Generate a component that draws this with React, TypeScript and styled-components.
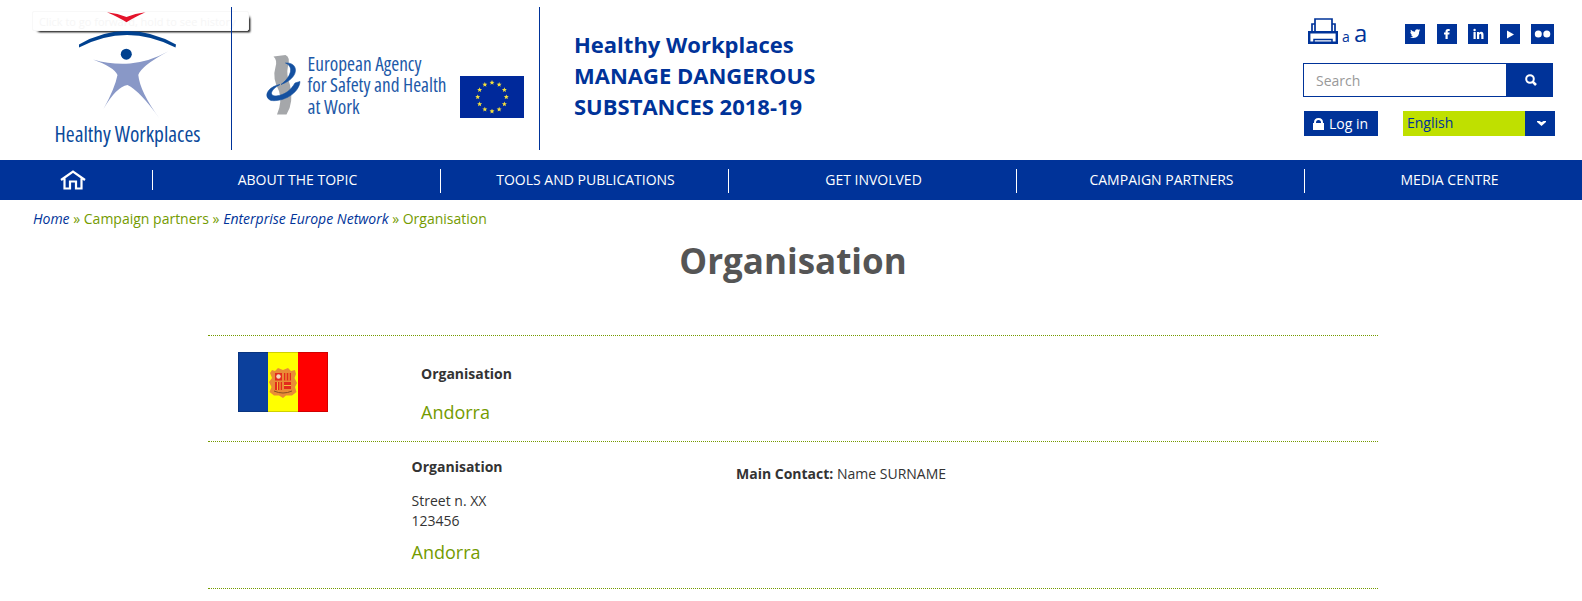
import React from 'react';
import styled, { createGlobalStyle } from 'styled-components';

const blue = '#003399';
const green = '#749b00';

const Global = createGlobalStyle`
  *, *::before, *::after { box-sizing: border-box; }
  html, body { margin: 0; overflow: hidden; background: #fff; }
  body { font: 14px/20px 'Open Sans', sans-serif; color: #333; }
  h1, h2, p, ul { margin: 0; padding: 0; }
  svg { display: block; }
`;

const Page = styled.div`
  width: 1582px;
  height: 601px;
  overflow: hidden;
  isolation: isolate;
`;

const Header = styled.header`
  position: relative;
  display: flex;
  height: 160px;
  padding-top: 7px;
`;

const BrandCell = styled.div<{ $width: number }>`
  width: ${(p) => p.$width}px;
  height: 143px;
  border-right: 1px solid ${blue};
`;

const Tooltip = styled.div`
  position: absolute;
  z-index: -1;
  left: 32px;
  top: 11px;
  width: 217px;
  height: 20px;
  padding-left: 6px;
  border: 1px solid #f8f8f8;
  border-radius: 2px;
  background: #fff;
  box-shadow: 4px 4px 2px -3px rgba(0, 0, 0, 0.9), 3px 3px 2px -2px rgba(0, 0, 0, 0.4);
  color: #f6f6f6;
  font-size: 11px;
  line-height: 19px;
  white-space: nowrap;
`;

const CampaignTitle = styled.h2`
  flex: 1;
  padding: 22px 0 0 34px;
  color: ${blue};
  font-size: 22px;
  font-weight: 700;
  line-height: 31px;
`;

const Tools = styled.div`
  width: 279px;
  padding-top: 11px;
`;

const TopTools = styled.div`
  display: flex;
  height: 45px;
  padding-left: 5px;
`;

const TextSmaller = styled.span`
  width: 16px;
  padding: 4px 0 0 4px;
  color: ${blue};
  font-size: 14px;
  line-height: 30px;
`;

const TextLarger = styled.span`
  width: 16px;
  color: ${blue};
  font-size: 24px;
  line-height: 29px;
`;

const Socials = styled.div`
  display: flex;
  gap: 11.5px;
  padding: 6px 0 0 35px;
`;

const Social = styled.span<{ $width?: number }>`
  width: ${(p) => p.$width ?? 20}px;
  height: 20px;
  background: ${blue};
`;

const SearchBox = styled.div`
  display: flex;
  width: 250px;
  height: 34px;
  border: 1px solid ${blue};
`;

const SearchField = styled.span`
  flex: 1;
  padding-left: 12px;
  color: #999;
  line-height: 34px;
`;

const SearchButton = styled.span`
  display: flex;
  align-items: center;
  justify-content: center;
  width: 46px;
  padding-left: 3px;
  background: ${blue};
`;

const Account = styled.div`
  display: flex;
  padding: 14px 0 0 1px;
`;

const Login = styled.span`
  display: flex;
  align-items: center;
  gap: 5px;
  width: 74px;
  height: 25px;
  margin-right: 25px;
  padding-left: 9px;
  background: ${blue};
  color: #fff;
`;

const Language = styled.span`
  width: 122px;
  height: 25px;
  padding-left: 4px;
  background: #bfe000;
  color: ${blue};
  line-height: 24px;
`;

const LanguageArrow = styled.span`
  display: flex;
  align-items: center;
  justify-content: center;
  width: 30px;
  height: 25px;
  padding-left: 2px;
  background: ${blue};
`;

const Nav = styled.nav`
  display: flex;
  height: 40px;
  background: ${blue};
  overflow: hidden;
`;

const NavHome = styled.span`
  flex: 0 0 153px;
  display: flex;
  align-items: center;
  padding-left: 60px;
`;

const NavItem = styled.span`
  flex: 0 0 288px;
  height: 24px;
  margin-top: 9px;
  padding-left: 2px;
  border-right: 1px solid #fff;
  color: #fff;
  line-height: 22px;
  text-align: center;
`;

const HomeDivider = styled.span`
  width: 1px;
  height: 20px;
  margin-left: auto;
  background: #fff;
`;

const Breadcrumb = styled.div`
  padding: 9px 0 0 33px;
  height: 29px;
  color: ${green};
`;

const Crumb = styled.em`
  color: ${blue};
`;

const PageTitle = styled.h1`
  height: 106px;
  padding: 12px 0 0 4px;
  color: #555;
  font-size: 35px;
  font-weight: 700;
  line-height: 40px;
  text-align: center;
`;

const List = styled.main`
  width: 1170px;
  margin-left: 208px;
  border-top: 1px dotted ${green};
`;

const Entry = styled.section<{ $height: number }>`
  display: flex;
  height: ${(p) => p.$height}px;
  border-bottom: 1px dotted ${green};
`;

const FlagCell = styled.div<{ $width: number }>`
  width: ${(p) => p.$width}px;
  padding: 16px 0 0 30px;
`;

const Details = styled.div<{ $top: number; $width: number }>`
  width: ${(p) => p.$width}px;
  padding-top: ${(p) => p.$top}px;
`;

const Name = styled.p<{ $gap: number }>`
  margin-bottom: ${(p) => p.$gap}px;
  font-weight: 700;
`;

const Address = styled.p`
  margin-bottom: 11px;
`;

const Country = styled.p`
  color: ${green};
  font-size: 18px;
`;

const star = (cx: number, cy: number, r: number) =>
  Array.from({ length: 10 }, (_, i) => {
    const a = (i * Math.PI) / 5 - Math.PI / 2;
    const d = i % 2 ? r * 0.45 : r;
    return `${cx + d * Math.cos(a)},${cy + d * Math.sin(a)}`;
  }).join(' ');

const HealthyLogo = () => (
  <svg width="230" height="143" viewBox="0 7 230 143">
    <path d="M107 12.300Q118 13.500 126.500 17Q135 13.500 145.500 12.300Q134 17.500 126.500 22.300Q119 17.500 107 12.300Z" fill="#e4132b" />
    <path d="M79 44.500Q102 31 127 31Q152 31 176 44.500L175.500 47.500Q151 35 127 35Q103 35 79 47.500Z" fill="#00418f" />
    <circle cx="126.300" cy="54.200" r="5.500" fill="#00418f" />
    <path d="M93 59.500Q112 65 130 63.500Q150 61.500 168 51.500Q141 66 138.300 75Q140 92 159.500 118.500Q140 91 127.500 85Q116 87 103.500 109Q115 88 117.500 75Q114 67 93 59.500Z" fill="#8998c7" />
    <text x="54.500" y="142.300" textLength="146" lengthAdjust="spacingAndGlyphs" fontSize="22" fontWeight="500" fontStretch="75%" fill="#0b4a9b">Healthy Workplaces</text>
  </svg>
);

const AgencyLogo = () => (
  <svg width="307" height="143" viewBox="232 7 307 143">
    <path d="M273.500 56.500L285.500 55Q290.500 57 288 66Q286 75 290 85Q294 103 286.500 114.500H277Q282.500 102 279 91Q272 78 275.500 67Q277.500 60 273.500 56.500Z" fill="#a5a7aa" />
    <path d="M285.500 63C299 62 300 78 281 84.500C290 78 295 67 285.500 63Z" fill="#1450a0" stroke="#1450a0" strokeWidth=".6" />
    <path d="M300 81.500C299 93 284 102 271 100.500C263 97 267 87 280 84.500C270 90 269 96 276 96C285 95 291 90 295 83Z" fill="#1450a0" stroke="#1450a0" strokeWidth=".6" />
    <g fontSize="19.500" fontWeight="500" fontStretch="75%" fill="#1d59a8">
      <text x="307.500" y="70.500" textLength="114" lengthAdjust="spacingAndGlyphs">European Agency</text>
      <text x="307.500" y="91.500" textLength="139" lengthAdjust="spacingAndGlyphs">for Safety and Health</text>
      <text x="307.500" y="113.500" textLength="52" lengthAdjust="spacingAndGlyphs">at Work</text>
    </g>
    <rect x="460" y="76" width="64" height="42" fill="#00299b" />
    {Array.from({ length: 12 }, (_, i) => {
      const a = (i * Math.PI) / 6;
      return <polygon key={i} points={star(492 + 14.3 * Math.sin(a), 97 - 14.3 * Math.cos(a), 2.6)} fill="#f5e03c" />;
    })}
  </svg>
);

const Printer = () => (
  <svg width="30" height="26" viewBox="0 0 30 26" fill="none" stroke={blue}>
    <path d="M7 13V1H24V13" strokeWidth="1.700" />
    <path d="M7 6H4V13M24 6H27V13" strokeWidth="1.700" />
    <path d="M1.200 24.800V14.200H28.800V24.800Z" strokeWidth="2.400" />
    <path d="M6 25V21.500H24V25" strokeWidth="1.500" />
  </svg>
);

const AndorraFlag = () => (
  <svg width="90" height="60" viewBox="0 0 90 60">
    <path d="M0 0H30V60H0Z" fill="#0c409c" />
    <path d="M30 0H60V60H30Z" fill="#ff0" />
    <path d="M60 0H90V60H60Z" fill="#f00" />
    <path d="M.5 59.500V.5H89.500V59.500Z" fill="none" stroke="#000" strokeOpacity=".18" />
    <path d="M32 21L34 18L37 19L40 16L45 18L50 16L53 19L57 18L58 22L56.500 26L59 31L57 35L58.500 40L54 43.500L48 43.500L45 46L41 43.500L36 43.500L31.500 40L33.500 35L31 30L34 26Z" fill="#e98c36" />
    <path d="M37 21H44V28.500H37ZM46 21H53V28.500H46ZM37 30H44V38H37ZM46 30H53V37H46Z" fill="#e22b1c" />
    <path d="M48 21V28.500M51 21V28.500M39.500 30V38M42 30V38M46 33.500H53" stroke="#f3ba3c" />
    <circle cx="40.500" cy="24.500" r="2.200" fill="#f4d9c0" />
    <path d="M36 39Q45 43 54 39" fill="none" stroke="#8a5120" />
  </svg>
);

const navItems = ['ABOUT THE TOPIC', 'TOOLS AND PUBLICATIONS', 'GET INVOLVED', 'CAMPAIGN PARTNERS', 'MEDIA CENTRE'];

export default function App() {
  return (
    <Page>
      <Global />
      <Header>
        <BrandCell $width={232}><HealthyLogo /></BrandCell>
        <BrandCell $width={308}><AgencyLogo /></BrandCell>
        <Tooltip>Click to go forward, hold to see history</Tooltip>
        <CampaignTitle>Healthy Workplaces<br />MANAGE DANGEROUS<br />SUBSTANCES 2018-19</CampaignTitle>
        <Tools>
          <TopTools>
            <Printer />
            <TextSmaller>a</TextSmaller>
            <TextLarger>a</TextLarger>
            <Socials>
              <Social>
                <svg width="20" height="20" viewBox="0 0 20 20"><path d="M5 13.200Q7 13.200 8 12.400Q6.300 12 6 10.700H7Q5.300 9.800 5.300 8L6.300 8.300Q5 7 5.900 5.700Q7.500 7.700 10 7.800Q9.800 5.300 12 5.200Q13 5.200 13.600 5.800L15 5.300L14.200 6.600L15.300 6.400L14.200 7.500Q14.200 14 8.500 14Q6.500 14 5 13.200Z" fill="#fff" /></svg>
              </Social>
              <Social>
                <svg width="20" height="20" viewBox="0 0 20 20"><path d="M8.500 15V10.500H7V8.500H8.500V7.500Q8.500 5 11 5H12.700V7H11.500Q10.700 7 10.700 7.800V8.500H12.600L12.300 10.500H10.700V15Z" fill="#fff" /></svg>
              </Social>
              <Social>
                <svg width="20" height="20" viewBox="0 0 20 20"><path d="M5.500 8H7.700V15H5.500ZM9 8H11V9Q11.700 7.800 13.200 7.800Q15.500 7.800 15.500 10.800V15H13.300V11.300Q13.300 9.700 12.300 9.700Q11.200 9.700 11.200 11.300V15H9Z" fill="#fff" /><circle cx="6.600" cy="6" r="1.200" fill="#fff" /></svg>
              </Social>
              <Social>
                <svg width="20" height="20" viewBox="0 0 20 20"><path d="M7 6.500L14 10.500L7 14.500Z" fill="#fff" /></svg>
              </Social>
              <Social $width={23}>
                <svg width="23" height="20" viewBox="0 0 23 20" fill="#fff"><circle cx="7.300" cy="10" r="3.500" /><circle cx="15.800" cy="10" r="3.500" /></svg>
              </Social>
            </Socials>
          </TopTools>
          <SearchBox>
            <SearchField>Search</SearchField>
            <SearchButton>
              <svg width="12" height="12" viewBox="0 0 12 12" fill="none" stroke="#fff" strokeWidth="2"><circle cx="5" cy="5" r="3.800" /><path d="M7.600 7.600L11 11" strokeWidth="2.600" /></svg>
            </SearchButton>
          </SearchBox>
          <Account>
            <Login>
              <svg width="11" height="12" viewBox="0 0 11 12"><path d="M0 5H11V12H0Z" fill="#fff" /><path d="M2 6V4.500Q2 1 5.500 1T9 4.500V6" fill="none" stroke="#fff" strokeWidth="2" /></svg>
              Log in
            </Login>
            <Language>English</Language>
            <LanguageArrow>
              <svg width="9" height="5" viewBox="0 0 9 5"><path d="M0 0H2.500L4.500 1.300L6.500 0H9V1L4.500 5L0 1Z" fill="#fff" /></svg>
            </LanguageArrow>
          </Account>
        </Tools>
      </Header>
      <Nav>
        <NavHome>
          <svg width="27" height="20" viewBox="0 0 27 20" fill="none" stroke="#fff" strokeWidth="2.200"><path d="M1 10L13 1.500L25 10M4.500 8.500V18.500H10V11.500H16V18.500H21.500V8.500" /></svg>
          <HomeDivider />
        </NavHome>
        {navItems.map((item) => <NavItem key={item}>{item}</NavItem>)}
      </Nav>
      <Breadcrumb><Crumb>Home</Crumb> » Campaign partners » <Crumb>Enterprise Europe Network</Crumb> » Organisation</Breadcrumb>
      <PageTitle>Organisation</PageTitle>
      <List>
        <Entry $height={106}>
          <FlagCell $width={213}><AndorraFlag /></FlagCell>
          <Details $top={28} $width={600}>
            <Name $gap={18}>Organisation</Name>
            <Country>Andorra</Country>
          </Details>
        </Entry>
        <Entry $height={147}>
          <FlagCell $width={203.6} />
          <Details $top={15} $width={324.4}>
            <Name $gap={14}>Organisation</Name>
            <Address>Street n. XX<br />123456</Address>
            <Country>Andorra</Country>
          </Details>
          <Details $top={22} $width={400}><b>Main Contact:</b> Name SURNAME</Details>
        </Entry>
      </List>
    </Page>
  );
}
